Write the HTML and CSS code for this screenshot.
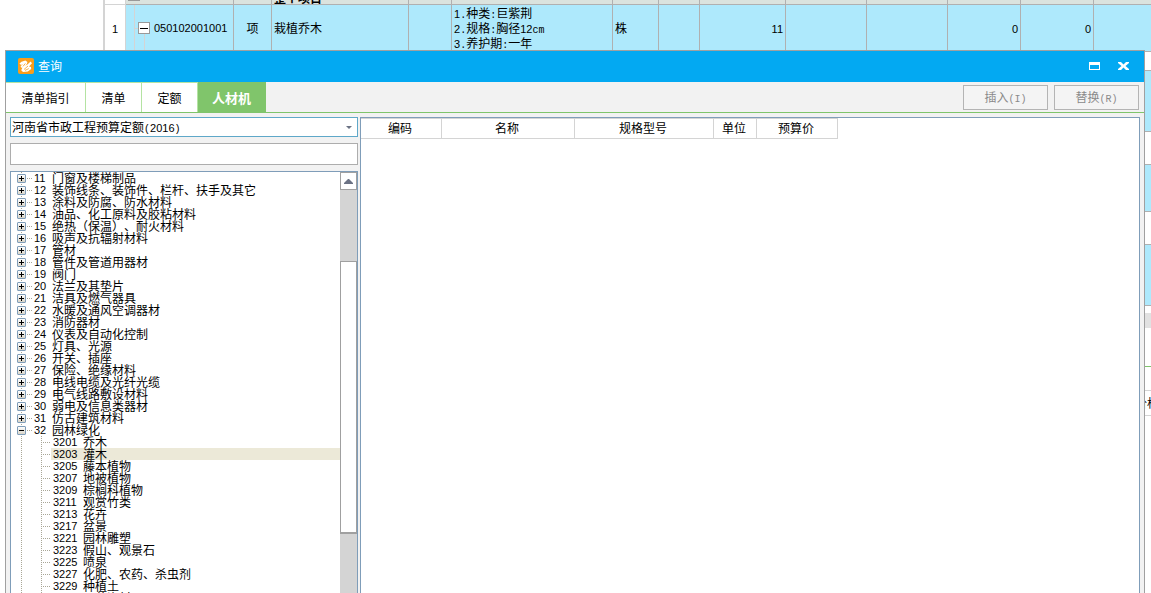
FILE: index.html
```
<!DOCTYPE html>
<html lang="zh-CN">
<head>
<meta charset="utf-8">
<title>查询</title>
<link rel="stylesheet" href="styles.css">
</head>
<body>
<main class="desk">
  <section class="sheet-area">
    <table class="sheet">
      <colgroup><col class="c-gutter"><col class="c-code"><col class="c-kind"><col class="c-name"><col class="c-a"><col class="c-feat"><col class="c-unit"><col class="c-b"><col class="c-qty"><col class="c-d"><col class="c-d"><col class="c-e"><col class="c-e"><col></colgroup>
      <tbody>
        <tr class="group h5"><th></th><td><div class="cut"><span class="cut-box"></span></div></td><td></td><td><div class="cut"><b>整个项目</b></div></td><td></td><td></td><td></td><td></td><td></td><td></td><td></td><td></td><td></td><td></td></tr>
        <tr class="item h47">
          <th><span class="num">1</span></th>
          <td class="code"><div class="code-in"><button class="fold" type="button" aria-label="折叠"></button><span class="num">050102001001</span></div></td>
          <td class="mid">项</td><td>栽植乔木</td><td></td>
          <td><span class="num">1</span><span class="mono">.</span>种类<span class="mono">:</span>巨紫荆<br><span class="num">2</span><span class="mono">.</span>规格<span class="mono">:</span>胸径<span class="num">12</span><span class="mono">cm</span><br><span class="num">3</span><span class="mono">.</span>养护期<span class="mono">:</span>一年</td>
          <td>株</td><td></td><td class="right"><span class="num">11</span></td><td></td><td></td><td class="right"><span class="num">0</span></td><td class="right"><span class="num">0</span></td><td></td>
        </tr>
        <tr class="h19"><th></th><td colspan="13"></td></tr>
        <tr class="item h61"><th></th><td colspan="13"></td></tr>
        <tr class="h33"><th></th><td colspan="13"></td></tr>
        <tr class="item h47"><th></th><td colspan="13"></td></tr>
        <tr class="h33"><th></th><td colspan="13"></td></tr>
        <tr class="item h61"><th></th><td colspan="13"></td></tr>
      </tbody>
    </table>
    <div class="hscroll"></div>
    <div class="lower-tabs"></div>
    <div class="lower-gap"></div>
    <div class="lower-head">价格</div>
  </section>

  <section class="dialog" aria-label="查询">
    <header class="titlebar">
      <svg class="logo" viewBox="0 0 16 16" aria-hidden="true"><rect width="16" height="16" rx="2" fill="#f99d1c"/><path d="M1.500 5.500 3.500 3.800 7.400 2.400 9.400 4 9 5.800 7.200 7.800 9.400 6.600 12.600 3.600 14 5.200 11 8.600 13 9 13.200 11 9.800 13.600 5 14 3.200 12.200 4.400 9.800 3 9.600 2.600 8 5.400 6 3 7Z" fill="#fff"/><path d="M6 11.500 10 8M7 12.400 10.800 10.600M5 8.400 7.400 5.400" stroke="#f99d1c" stroke-width=".8" fill="none"/></svg>
      <h1>查询</h1>
      <button type="button" class="win" aria-label="最大化"><svg width="11" height="8" viewBox="0 0 11 8"><path d="M0 0h11v8H0zM1 3v4h9V3z" fill="#fff" fill-rule="evenodd"/></svg></button>
      <button type="button" class="win" aria-label="关闭"><svg width="11" height="8" viewBox="0 0 11 8"><path d="M0 0h3l2.500 2.500L8 0h3v1L7.500 4 11 7v1H8L5.500 5.500 3 8H0V7l3.500-3L0 1z" fill="#fff"/></svg></button>
    </header>
    <nav class="tabs">
      <button type="button" class="tab wide">清单指引</button>
      <button type="button" class="tab">清单</button>
      <button type="button" class="tab">定额</button>
      <button type="button" class="tab on">人材机</button>
      <span class="grow"></span>
      <button type="button" class="act" disabled>插入<span class="mono">(I)</span></button>
      <button type="button" class="act" disabled>替换<span class="mono">(R)</span></button>
    </nav>
    <div class="body">
      <aside class="side">
        <button type="button" class="combo" aria-haspopup="listbox" aria-label="定额库"><span>河南省市政工程预算定额<span class="mono">(</span><span class="num">2016</span><span class="mono">)</span></span><svg width="6" height="3" viewBox="0 0 6 3"><path d="M0 0h6L3 3z" fill="#6b7284"/></svg></button>
        <input class="search" type="text" aria-label="搜索">
        <div class="treebox">
          <ul class="tree" id="tree"></ul>
          <div class="vbar"><button type="button" class="up" aria-label="向上滚动"><svg width="9" height="5" viewBox="0 0 9 5"><path d="M4 0h1l4 4v1H0V4z" fill="#6b7284"/></svg></button><div class="thumb"></div></div>
        </div>
      </aside>
      <div class="results">
        <table class="grid">
          <thead><tr><th class="g1">编码</th><th class="g2">名称</th><th class="g3">规格型号</th><th class="g4">单位</th><th class="g5">预算价</th></tr></thead>
        </table>
      </div>
    </div>
  </section>
</main>
<script src="tree.js"></script>
</body>
</html>
```
FILE: styles.css
```
* { box-sizing: border-box; }
body { margin: 0; background: #fff; color: #000; font: 12px/14px "Noto Sans CJK SC", sans-serif; text-spacing-trim: space-all; }
button, input { font: inherit; color: inherit; margin: 0; padding: 0; border-radius: 0; }
svg { display: block; }
.num, .mono { line-height: 10px; }
.num { font-family: "Liberation Sans", sans-serif; font-size: 11px; }
.mono { font-family: "Liberation Mono", monospace; font-size: 10px; }

.desk { position: relative; height: 100vh; overflow: hidden; }
.sheet-area { margin-left: 103px; border-left: 2px solid #d4d4d4; }
.sheet { width: 100%; table-layout: fixed; border-collapse: separate; border-spacing: 0; }
.sheet td { padding: 0 2px; border-right: 1px solid #b0b0b0; border-bottom: 1px solid #b0b0b0; }
.sheet th { padding: 0; border-right: 1px solid #d4d4d4; border-bottom: 1px solid #d4d4d4; font-weight: 400; }
.sheet td:last-child { border-right: 0; }
.c-gutter { width: 21px; }
.c-code { width: 108px; }
.c-kind { width: 38px; }
.c-name { width: 137px; }
.c-a { width: 43px; }
.c-feat { width: 161px; }
.c-unit { width: 46px; }
.c-b { width: 41px; }
.c-qty { width: 86px; }
.c-d { width: 81px; }
.c-e { width: 73px; }
.h5 { height: 5px; }
.h19 { height: 19px; }
.h33 { height: 33px; }
.h47 { height: 47px; }
.h61 { height: 61px; }
.group td { background: #dbe3de; }
.item td { background: #aee9fc; }
.sheet .mid { text-align: center; }
.sheet .right { text-align: right; }
.cut { display: flex; align-items: flex-end; height: 4px; overflow: hidden; line-height: 12px; }
.cut-box { width: 12px; height: 1px; margin: 0 0 3px; background: #999; }
.sheet .code { padding: 0; }
.code-in { display: flex; align-items: center; gap: 4px; height: 46px; padding-left: 12px; background: linear-gradient(#d4d4d4, #d4d4d4) 8px 0 / 1px 46px no-repeat, linear-gradient(#d4d4d4, #d4d4d4) 18px 24px / 1px 22px no-repeat, linear-gradient(#d4d4d4, #d4d4d4) 8px 23px / 6px 1px no-repeat; }
.fold { width: 12px; height: 12px; border: 1px solid #999; background: linear-gradient(#000, #000) center / 8px 1px no-repeat #fff; }
.hscroll { height: 22px; border-top: 7px solid #fff; background: #e1e1e1; }
.lower-tabs { height: 39px; border-bottom: 1px solid #7ec36b; }
.lower-gap { height: 24px; border-bottom: 1px solid #d4d4d4; }
.lower-head { height: 25px; border-bottom: 1px solid #d4d4d4; line-height: 24px; text-align: right; margin-right: -8px; }

.dialog { position: absolute; top: 50px; left: 5px; right: 6px; bottom: 0; display: flex; flex-direction: column; border: 1px solid #a0a0a0; border-bottom: 0; background: #f2f2f2; }
.titlebar { display: flex; align-items: center; flex: none; height: 31px; padding: 0 10px 1px 12px; background: #03a9f2; color: #fff; }
.logo { width: 16px; height: 16px; margin-right: 4px; }
.titlebar h1 { flex: 1; margin: 0; font-size: 12px; font-weight: 400; }
.win { display: flex; align-items: center; justify-content: center; width: 21px; height: 20px; border: 0; background: none; }
.win + .win { margin-left: 8px; }
.tabs { display: flex; align-items: center; flex: none; height: 31px; border-bottom: 1px solid #7fc46b; padding-right: 5px; }
.tab { align-self: stretch; width: 56px; border: 0; border-top: 1px solid #b4e3a2; border-right: 1px solid #b4e3a2; background: #fff; }
.tab.wide { width: 80px; }
.tab.on { width: 68px; border-color: #80c56b; background: #80c56b; color: #fff; font-size: 13px; font-weight: 700; }
.grow { flex: 1; }
.act { width: 85px; height: 25px; border: 1px solid #b4b4b4; background: #f4f4f4; color: #8a8a8a; }
.act + .act { margin-left: 6px; }

.body { display: flex; flex: 1; min-height: 0; gap: 2px; padding: 4px 4px 0; }
.side { display: flex; flex-direction: column; flex: none; width: 348px; gap: 6px; }
.combo { display: flex; align-items: center; justify-content: space-between; flex: none; height: 20px; padding: 0 5px 0 1px; border: 1px solid #5fa8c9; background: #fff; text-align: left; }
.search { flex: none; width: 100%; height: 22px; padding: 0 3px; border: 1px solid #adadad; background: #fff; }
.treebox { display: flex; flex: 1; min-height: 0; border: 1px solid #7f9db9; border-bottom: 0; background: #fff; }
.tree { flex: 1; min-width: 0; margin: 0; padding: 0; list-style: none; overflow: hidden; line-height: 12px; }
.tree ul { margin: 0; padding: 0; list-style: none; }
.row { display: flex; height: 12px; padding-left: 6px; white-space: pre; }
.row .num { flex: none; width: 18px; line-height: 12px; }
.knob { display: flex; align-items: center; flex: none; width: 17px; background: repeating-linear-gradient(#a9a797 0 1px, transparent 1px 2px) 4px 0 / 1px 12px no-repeat, repeating-linear-gradient(90deg, #a9a797 0 1px, transparent 1px 2px) 10px 6px / 6px 1px no-repeat; }
.pm { width: 9px; height: 9px; border: 1px solid #7f9db9; border-radius: 1px; background: linear-gradient(#000, #000) center / 5px 1px no-repeat, linear-gradient(#000, #000) center / 1px 5px no-repeat, linear-gradient(#fff, #d8d4c8); }
.pm.open { background: linear-gradient(#000, #000) center / 5px 1px no-repeat, linear-gradient(#fff, #d8d4c8); }
.leaf { padding-left: 0; }
.stem { flex: none; width: 40px; background: repeating-linear-gradient(#a9a797 0 1px, transparent 1px 2px) 10px 0 / 1px 12px no-repeat, repeating-linear-gradient(#a9a797 0 1px, transparent 1px 2px) 30px 0 / 1px 12px no-repeat, repeating-linear-gradient(90deg, #a9a797 0 1px, transparent 1px 2px) 30px 6px / 10px 1px no-repeat; }
.label { display: flex; flex: 1; padding-left: 2px; }
.leaf .num { width: 30px; }
.picked .label { background: #ece9d8; }
.vbar { flex: none; width: 17px; background: #d4d4d4; }
.up { display: flex; align-items: center; justify-content: center; width: 17px; height: 18px; border: 1px solid #a0a0a0; background: #fff; }
.thumb { height: 273px; margin-top: 71px; border: 1px solid #a0a0a0; border-bottom-width: 2px; background: #fff; }

.results { flex: 1; min-width: 0; border: 1px solid #7f9db9; border-bottom: 0; background: #fff; }
.grid { table-layout: fixed; border-collapse: separate; border-spacing: 0; }
.grid th { height: 21px; padding: 0 2px 1px 0; border: 1px solid #d4d4d4; border-left: 0; font-weight: 400; }
.g1 { width: 81px; }
.g2 { width: 133px; }
.g3 { width: 139px; }
.g4 { width: 43px; }
.g5 { width: 81px; }
```
FILE: tree.js
```
const groups = [
  ["11", "门窗及楼梯制品"], ["12", "装饰线条、装饰件、栏杆、扶手及其它"], ["13", "涂料及防腐、防水材料"],
  ["14", "油品、化工原料及胶粘材料"], ["15", "绝热（保温）、耐火材料"], ["16", "吸声及抗辐射材料"],
  ["17", "管材"], ["18", "管件及管道用器材"], ["19", "阀门"], ["20", "法兰及其垫片"],
  ["21", "洁具及燃气器具"], ["22", "水暖及通风空调器材"], ["23", "消防器材"], ["24", "仪表及自动化控制"],
  ["25", "灯具、光源"], ["26", "开关、插座"], ["27", "保险、绝缘材料"], ["28", "电线电缆及光纤光缆"],
  ["29", "电气线路敷设材料"], ["30", "弱电及信息类器材"], ["31", "仿古建筑材料"],
  ["32", "园林绿化", [
    ["3201", "乔木"], ["3203", "灌木"], ["3205", "藤本植物"], ["3207", "地被植物"], ["3209", "棕榈科植物"],
    ["3211", "观赏竹类"], ["3213", "花卉"], ["3217", "盆景"], ["3221", "园林雕塑"], ["3223", "假山、观景石"],
    ["3225", "喷泉"], ["3227", "化肥、农药、杀虫剂"], ["3229", "种植土"], ["3231", "园艺资材"]
  ]]
];
const leaf = ([code, name]) =>
  `<li class="row leaf${code === "3203" ? " picked" : ""}"><span class="stem"></span><span class="label"><span class="num">${code}</span><span>${name}</span></span></li>`;
document.getElementById("tree").innerHTML = groups.map(([code, name, kids]) =>
  `<li><div class="row"><span class="knob"><span class="pm${kids ? " open" : ""}"></span></span><span class="num">${code}</span><span>${name}</span></div>${kids ? `<ul>${kids.map(leaf).join("")}</ul>` : ""}</li>`
).join("");
```
